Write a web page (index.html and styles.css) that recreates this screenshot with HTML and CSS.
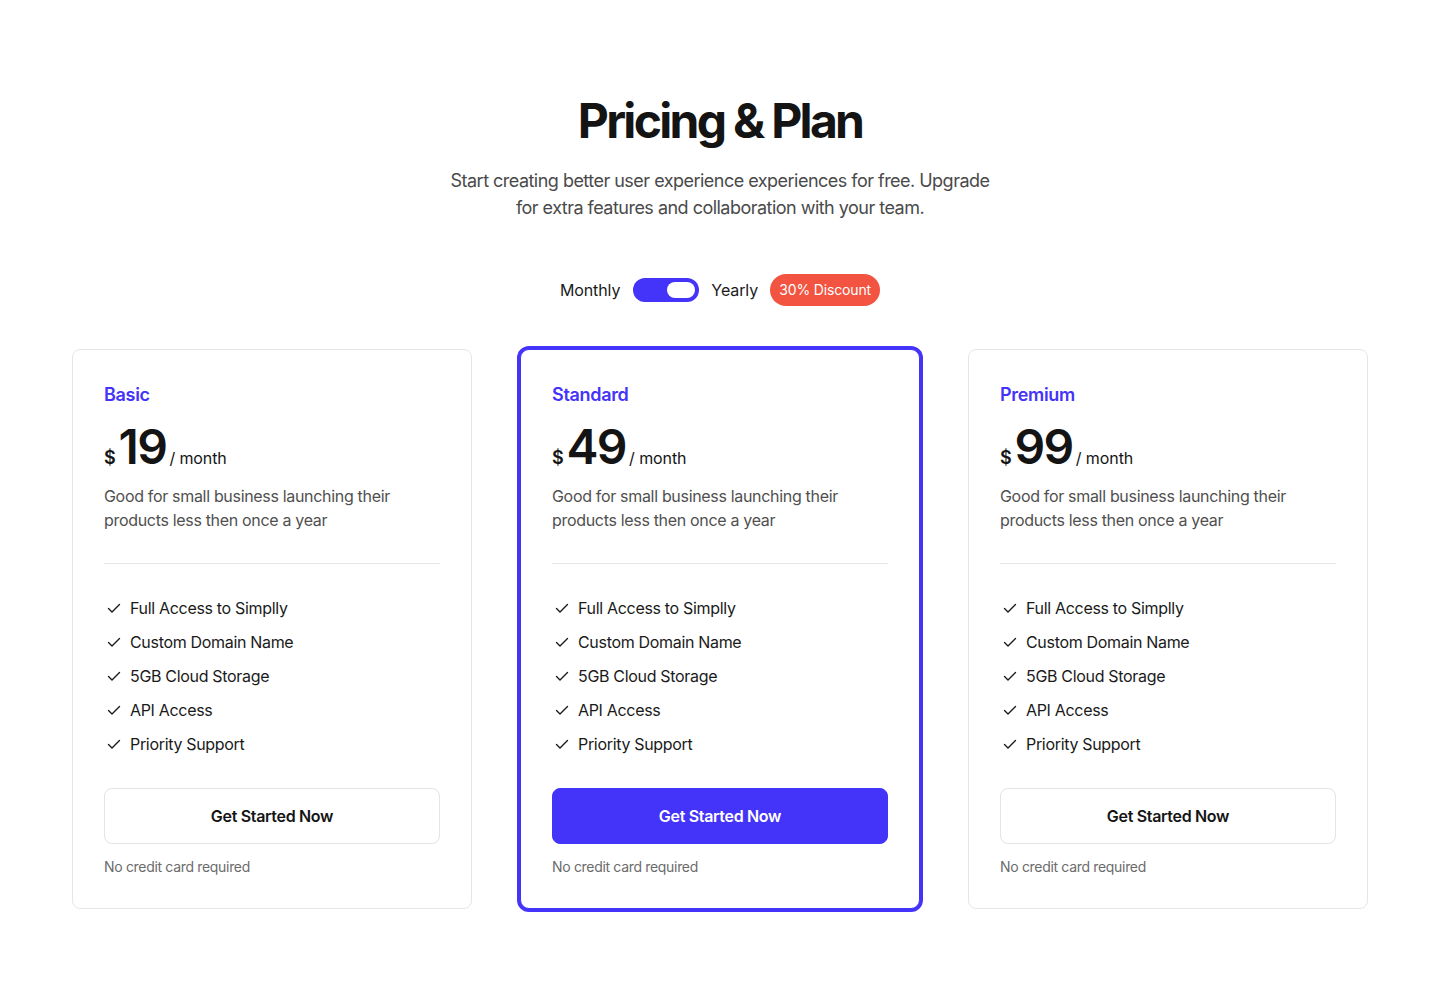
FILE: index.html
```html
<!DOCTYPE html>
<html lang="en">
<head>
<meta charset="utf-8">
<title>Pricing &amp; Plan</title>
<link rel="stylesheet" href="styles.css">
</head>
<body>
<main class="page">
  <header class="hero">
    <h1 class="title">Pricing &amp; Plan</h1>
    <p class="subtitle">Start creating better user experience experiences for free. Upgrade for extra features and collaboration with your team.</p>
  </header>

  <div class="billing">
    <span class="billing-label">Monthly</span>
    <span class="switch"><span class="switch-knob"></span></span>
    <span class="billing-label">Yearly</span>
    <span class="badge">30% Discount</span>
  </div>

  <section class="plans">
    <article class="card">
      <h2 class="plan-name">Basic</h2>
      <div class="price"><span class="currency">$</span><span class="amount">19</span><span class="period">/ month</span></div>
      <p class="desc">Good for small business launching their products less then once a year</p>
      <hr class="divider">
      <ul class="features">
        <li><svg class="check" viewBox="0 0 16 16"><path d="M2.5 8.5l3.5 3.5 7.5-7.5"/></svg>Full Access to Simplly</li>
        <li><svg class="check" viewBox="0 0 16 16"><path d="M2.5 8.5l3.5 3.5 7.5-7.5"/></svg>Custom Domain Name</li>
        <li><svg class="check" viewBox="0 0 16 16"><path d="M2.5 8.5l3.5 3.5 7.5-7.5"/></svg>5GB Cloud Storage</li>
        <li><svg class="check" viewBox="0 0 16 16"><path d="M2.5 8.5l3.5 3.5 7.5-7.5"/></svg>API Access</li>
        <li><svg class="check" viewBox="0 0 16 16"><path d="M2.5 8.5l3.5 3.5 7.5-7.5"/></svg>Priority Support</li>
      </ul>
      <button class="btn">Get Started Now</button>
      <p class="note">No credit card required</p>
    </article>

    <article class="card card-featured">
      <h2 class="plan-name">Standard</h2>
      <div class="price"><span class="currency">$</span><span class="amount">49</span><span class="period">/ month</span></div>
      <p class="desc">Good for small business launching their products less then once a year</p>
      <hr class="divider">
      <ul class="features">
        <li><svg class="check" viewBox="0 0 16 16"><path d="M2.5 8.5l3.5 3.5 7.5-7.5"/></svg>Full Access to Simplly</li>
        <li><svg class="check" viewBox="0 0 16 16"><path d="M2.5 8.5l3.5 3.5 7.5-7.5"/></svg>Custom Domain Name</li>
        <li><svg class="check" viewBox="0 0 16 16"><path d="M2.5 8.5l3.5 3.5 7.5-7.5"/></svg>5GB Cloud Storage</li>
        <li><svg class="check" viewBox="0 0 16 16"><path d="M2.5 8.5l3.5 3.5 7.5-7.5"/></svg>API Access</li>
        <li><svg class="check" viewBox="0 0 16 16"><path d="M2.5 8.5l3.5 3.5 7.5-7.5"/></svg>Priority Support</li>
      </ul>
      <button class="btn btn-primary">Get Started Now</button>
      <p class="note">No credit card required</p>
    </article>

    <article class="card">
      <h2 class="plan-name">Premium</h2>
      <div class="price"><span class="currency">$</span><span class="amount">99</span><span class="period">/ month</span></div>
      <p class="desc">Good for small business launching their products less then once a year</p>
      <hr class="divider">
      <ul class="features">
        <li><svg class="check" viewBox="0 0 16 16"><path d="M2.5 8.5l3.5 3.5 7.5-7.5"/></svg>Full Access to Simplly</li>
        <li><svg class="check" viewBox="0 0 16 16"><path d="M2.5 8.5l3.5 3.5 7.5-7.5"/></svg>Custom Domain Name</li>
        <li><svg class="check" viewBox="0 0 16 16"><path d="M2.5 8.5l3.5 3.5 7.5-7.5"/></svg>5GB Cloud Storage</li>
        <li><svg class="check" viewBox="0 0 16 16"><path d="M2.5 8.5l3.5 3.5 7.5-7.5"/></svg>API Access</li>
        <li><svg class="check" viewBox="0 0 16 16"><path d="M2.5 8.5l3.5 3.5 7.5-7.5"/></svg>Priority Support</li>
      </ul>
      <button class="btn">Get Started Now</button>
      <p class="note">No credit card required</p>
    </article>
  </section>
</main>
</body>
</html>
```
FILE: styles.css
```css
* { box-sizing: border-box; }

html, body {
  margin: 0;
  padding: 0;
  background: #ffffff;
}

body {
  font-family: Inter, "Noto Sans", "Liberation Sans", sans-serif;
  color: #141414;
  letter-spacing: -0.02em;
}

.page {
  padding-top: 92px;
  padding-bottom: 40px;
  display: flex;
  flex-direction: column;
  align-items: center;
}

.hero {
  display: flex;
  flex-direction: column;
  align-items: center;
  text-align: center;
}

.title {
  margin: 0;
  font-size: 48px;
  line-height: 58px;
  font-weight: 700;
  letter-spacing: -2.7px;
  color: #141414;
}

.subtitle {
  margin: 17px 0 0;
  width: 560px;
  font-size: 18px;
  line-height: 27px;
  letter-spacing: -0.52px;
  color: #4a4a4a;
}

.billing {
  margin-top: 53px;
  height: 32px;
  display: flex;
  align-items: center;
  gap: 12px;
}

.billing-label {
  font-size: 16px;
  line-height: 24px;
  letter-spacing: -0.1px;
  color: #1a1a1a;
}

.switch {
  width: 66px;
  height: 24px;
  border-radius: 12px;
  background: #4433f8;
  display: flex;
  align-items: center;
  justify-content: flex-end;
  padding-right: 4px;
  margin-left: 1px;
}

.switch-knob {
  width: 28px;
  height: 16px;
  border-radius: 8px;
  background: #ffffff;
}

.badge {
  height: 32px;
  width: 110px;
  text-align: center;
  border-radius: 16px;
  background: #f25441;
  color: #ffffff;
  font-size: 14px;
  line-height: 32px;
  letter-spacing: -0.15px;
}

.plans {
  margin-top: 43px;
  display: grid;
  grid-template-columns: repeat(3, 400px);
  gap: 48px;
}

.card {
  border: 1px solid #e6e6ea;
  border-radius: 8px;
  padding: 31px 31px 31px;
  display: flex;
  flex-direction: column;
  background: #fff;
}

.card-featured {
  border-color: #4433f8;
  box-shadow: 0 0 0 3px #4433f8;
  border-radius: 9px;
}

.plan-name {
  margin: 0;
  font-size: 18px;
  line-height: 28px;
  font-weight: 600;
  color: #4433f8;
}

.price {
  margin-top: 14px;
  height: 48px;
  display: flex;
  align-items: baseline;
  color: #141414;
}

.currency {
  font-size: 18px;
  font-weight: 600;
  margin-right: 3px;
}

.amount {
  font-size: 48px;
  line-height: 48px;
  font-weight: 600;
  letter-spacing: -1.5px;
  margin-right: 3px;
}

.period {
  font-size: 16px;
  font-weight: 400;
  letter-spacing: -0.1px;
}

.desc {
  margin: 13px 0 0;
  font-size: 16px;
  line-height: 24px;
  color: #505050;
}

.divider {
  margin: 31px 0 0;
  border: 0;
  border-top: 1px solid #e6e6ea;
  height: 0;
}

.features {
  list-style: none;
  margin: 32px 0 0;
  padding: 0;
  display: flex;
  flex-direction: column;
  gap: 10px;
}

.features li {
  display: flex;
  align-items: center;
  font-size: 16px;
  line-height: 24px;
  color: #1a1a1a;
}

.check {
  width: 16px;
  height: 16px;
  margin: 0 8px 0 2px;
  fill: none;
  stroke: #1a1a1a;
  stroke-width: 1.4;
  stroke-linecap: round;
  stroke-linejoin: round;
}

.btn {
  margin-top: 32px;
  height: 56px;
  border: 1px solid #e3e3e8;
  border-radius: 8px;
  background: #ffffff;
  font-family: inherit;
  font-size: 16px;
  font-weight: 600;
  letter-spacing: -0.02em;
  color: #141414;
  cursor: pointer;
}

.btn-primary {
  background: #4433f8;
  border-color: #4433f8;
  color: #ffffff;
}

.note {
  margin: 13px 0 0;
  font-size: 14px;
  line-height: 20px;
  color: #6b6b6b;
}
```
